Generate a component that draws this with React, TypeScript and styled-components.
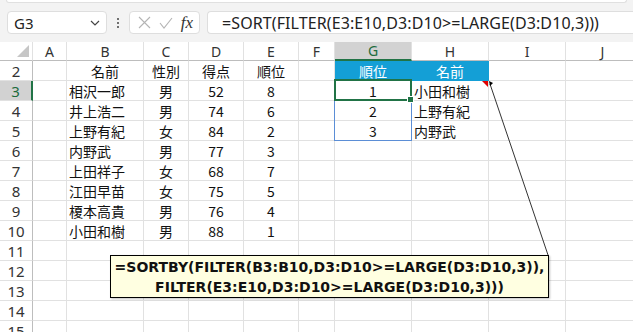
import * as React from 'react';
import styled, { createGlobalStyle, css } from 'styled-components';

const GlobalStyle = createGlobalStyle`
	html, body {
		margin: 0;
		padding: 0;
		background: #ffffff;
		overflow: hidden;
	}
	body {
		font-family: 'Noto Sans', 'Noto Sans CJK JP', sans-serif;
	}
`;

const JP = `'Noto Sans CJK JP', 'Noto Sans', sans-serif`;

const Page = styled.div`
	position: relative;
	width: 633px;
	height: 332px;
	overflow: hidden;
	background: #ffffff;
`;

const Toolbar = styled.div`
	height: 42px;
	background: #f3f3f3;
	display: flex;
	flex-direction: column;
`;

const RibbonEdge = styled.div`
	height: 3px;
	margin: 0 6px;
	background: #ffffff;
	border: 1px solid #e0e0e0;
	border-top: none;
	border-radius: 0 0 6px 6px;
	box-sizing: border-box;
`;

const FormulaRow = styled.div`
	display: flex;
	align-items: center;
	padding: 8px 0 0 7px;
	height: 23px;
`;

const Box = styled.div<{ $w?: number; $grow?: boolean }>`
	display: flex;
	align-items: center;
	height: 23px;
	box-sizing: border-box;
	background: #ffffff;
	border: 1px solid #dedede;
	border-radius: 4px;
	${(p) => (p.$w ? `width: ${p.$w}px;` : '')}
	${(p) =>
		p.$grow &&
		css`
			flex: 1;
			border-right: none;
			border-radius: 4px 0 0 4px;
		`}
`;

const NameText = styled.span`
	flex: 1;
	padding-left: 6px;
	font-size: 15px;
	color: #222;
`;

const Chevron = styled.svg`
	margin-right: 6px;
`;

const Dots = styled.div`
	width: 22px;
	display: flex;
	flex-direction: column;
	align-items: center;
	gap: 2px;
	& > i {
		width: 2px;
		height: 2px;
		background: #444;
		border-radius: 1px;
	}
`;

const Spacer = styled.div<{ $w: number }>`
	width: ${(p) => p.$w}px;
`;

const IconGroup = styled.div`
	flex: 1;
	display: flex;
	align-items: center;
	justify-content: space-between;
	padding: 0 6px 0 8px;
`;

const Fx = styled.span`
	font-family: 'Liberation Serif', 'DejaVu Serif', serif;
	font-style: italic;
	font-size: 17px;
	color: #333;
`;

const FormulaText = styled.span`
	padding-left: 14px;
	font-size: 16px;
	letter-spacing: 0.1px;
	color: #222;
	white-space: nowrap;
`;

const Grid = styled.div`
	display: grid;
	grid-template-columns: 33px 34px 77px 45px 55px 55px 36px 77px 77px 77px 74px;
	grid-template-rows: 19px repeat(14, 20px);
`;

const Corner = styled.div`
	position: relative;
	background: #ffffff;
	border-right: 1px solid #e1e1e1;
	border-bottom: 1px solid #bdbdbd;
	&::after {
		content: '';
		position: absolute;
		right: 3px;
		bottom: 3px;
		width: 0;
		height: 0;
		border-left: 12px solid transparent;
		border-bottom: 12px solid #c6c6c6;
	}
`;

const ColHead = styled.div<{ $active?: boolean }>`
	display: flex;
	align-items: center;
	justify-content: center;
	box-sizing: border-box;
	font-size: 14px;
	color: #333;
	background: #ffffff;
	border-right: 1px solid #e1e1e1;
	border-bottom: 1px solid #bdbdbd;
	${(p) =>
		p.$active &&
		css`
			background: #d2d2d2;
			color: #1d6b3c;
			border-bottom: 2px solid #217346;
		`}
`;

const RowHead = styled.div<{ $active?: boolean }>`
	display: flex;
	align-items: center;
	justify-content: center;
	box-sizing: border-box;
	font-size: 15px;
	color: #333;
	background: #ffffff;
	border-right: 1px solid #bdbdbd;
	border-bottom: 1px solid #e1e1e1;
	${(p) =>
		p.$active &&
		css`
			background: #d2d2d2;
			color: #1d6b3c;
			border-right: 2px solid #217346;
		`}
`;

const Cell = styled.div<{ $align?: 'left' | 'center'; $head?: boolean; $note?: boolean }>`
	position: relative;
	display: flex;
	align-items: center;
	justify-content: ${(p) => (p.$align === 'left' ? 'flex-start' : 'center')};
	padding-left: ${(p) => (p.$align === 'left' ? '2px' : '0')};
	box-sizing: border-box;
	font-family: ${JP};
	font-size: 14px;
	color: #111;
	white-space: nowrap;
	border-right: 1px solid #e1e1e1;
	border-bottom: 1px solid #e1e1e1;
	${(p) =>
		p.$head &&
		css`
			background: #149fd6;
			color: #ffffff;
			border-right-color: #149fd6;
			border-bottom-color: #149fd6;
		`}
	${(p) =>
		p.$note &&
		css`
			&::after {
				content: '';
				position: absolute;
				top: 0;
				right: 0;
				width: 0;
				height: 0;
				border-left: 6px solid transparent;
				border-top: 6px solid #e00000;
			}
		`}
`;

/* selection overlays sit over the active cell G3 */
const RangeOutline = styled.div`
	position: absolute;
	left: -1px;
	top: -1px;
	width: 78px;
	height: 61px;
	box-sizing: border-box;
	border: 1px solid #5b8ed6;
	pointer-events: none;
	z-index: 2;
`;

const ActiveCell = styled.div`
	position: absolute;
	left: -1px;
	top: -2px;
	width: 78px;
	height: 22px;
	box-sizing: border-box;
	border: 2px solid #217346;
	pointer-events: none;
	z-index: 3;
	&::after {
		content: '';
		position: absolute;
		right: -4px;
		bottom: -4px;
		width: 5px;
		height: 5px;
		background: #217346;
		border: 1px solid #ffffff;
	}
`;

const Callout = styled.div`
	position: absolute;
	left: 110px;
	top: 255px;
	width: 439px;
	height: 43px;
	box-sizing: border-box;
	background: #ffffe1;
	border: 1px solid #000000;
	box-shadow: 1px 1px 2px rgba(0, 0, 0, 0.25);
	display: flex;
	flex-direction: column;
	align-items: center;
	justify-content: center;
	font-family: 'DejaVu Sans', Verdana, sans-serif;
	font-weight: bold;
	font-size: 14px;
	line-height: 20px;
	color: #111;
	z-index: 5;
`;

const Connector = styled.svg`
	position: absolute;
	left: 0;
	top: 0;
	pointer-events: none;
	z-index: 6;
`;

const columns = ['A', 'B', 'C', 'D', 'E', 'F', 'G', 'H', 'I', 'J'];

const people: [string, string, string, string][] = [
	['相沢一郎', '男', '52', '8'],
	['井上浩二', '男', '74', '6'],
	['上野有紀', '女', '84', '2'],
	['内野武', '男', '77', '3'],
	['上田祥子', '女', '68', '7'],
	['江田早苗', '女', '75', '5'],
	['榎本高貴', '男', '76', '4'],
	['小田和樹', '男', '88', '1'],
];

const top3: [string, string][] = [
	['1', '小田和樹'],
	['2', '上野有紀'],
	['3', '内野武'],
];

const App: React.FC = () => {
	const rows: React.ReactNode[] = [];

	for (let r = 2; r <= 15; r++) {
		const person = r >= 3 && r <= 10 ? people[r - 3] : null;
		const pick = r >= 3 && r <= 5 ? top3[r - 3] : null;
		const isHead = r === 2;
		rows.push(
			<React.Fragment key={r}>
				<RowHead $active={r === 3}>{r}</RowHead>
				<Cell />
				<Cell $align={isHead ? 'center' : 'left'}>{isHead ? '名前' : person?.[0]}</Cell>
				<Cell>{isHead ? '性別' : person?.[1]}</Cell>
				<Cell>{isHead ? '得点' : person?.[2]}</Cell>
				<Cell>{isHead ? '順位' : person?.[3]}</Cell>
				<Cell />
				<Cell $head={isHead}>
					{isHead ? '順位' : pick?.[0]}
					{r === 3 && (
						<>
							<RangeOutline />
							<ActiveCell />
						</>
					)}
				</Cell>
				<Cell $head={isHead} $align={isHead ? 'center' : 'left'} $note={r === 3}>
					{isHead ? '名前' : pick?.[1]}
				</Cell>
				<Cell />
				<Cell />
			</React.Fragment>
		);
	}

	return (
		<Page>
			<GlobalStyle />
			<Toolbar>
				<RibbonEdge />
				<FormulaRow>
					<Box $w={100}>
						<NameText>G3</NameText>
						<Chevron width="10" height="6" viewBox="0 0 10 6">
							<path d="M1 1l4 4 4-4" fill="none" stroke="#444" strokeWidth="1.2" />
						</Chevron>
					</Box>
					<Dots>
						<i />
						<i />
						<i />
					</Dots>
					<Box $w={71}>
						<IconGroup>
							<svg width="13" height="13" viewBox="0 0 13 13">
								<path d="M1 1l11 11M12 1L1 12" stroke="#b4b4b4" strokeWidth="1.1" />
							</svg>
							<svg width="14" height="12" viewBox="0 0 14 12">
								<path d="M1 6l4 5L13 1" fill="none" stroke="#b4b4b4" strokeWidth="1.1" />
							</svg>
							<Fx>fx</Fx>
						</IconGroup>
					</Box>
					<Spacer $w={7} />
					<Box $grow>
						<FormulaText>=SORT(FILTER(E3:E10,D3:D10&gt;=LARGE(D3:D10,3)))</FormulaText>
					</Box>
				</FormulaRow>
			</Toolbar>
			<Grid>
				<Corner />
				{columns.map((c) => (
					<ColHead key={c} $active={c === 'G'}>
						{c}
					</ColHead>
				))}
				{rows}
			</Grid>
			<Callout>
				<span>=SORTBY(FILTER(B3:B10,D3:D10&gt;=LARGE(D3:D10,3)),</span>
				<span>FILTER(E3:E10,D3:D10&gt;=LARGE(D3:D10,3)))</span>
			</Callout>
			<Connector width="633" height="332">
				<line x1="490" y1="84" x2="548" y2="255" stroke="#333" strokeWidth="1" />
				<path d="M489 81l4 2-3 3z" fill="#000" />
			</Connector>
		</Page>
	);
};

export default App;
